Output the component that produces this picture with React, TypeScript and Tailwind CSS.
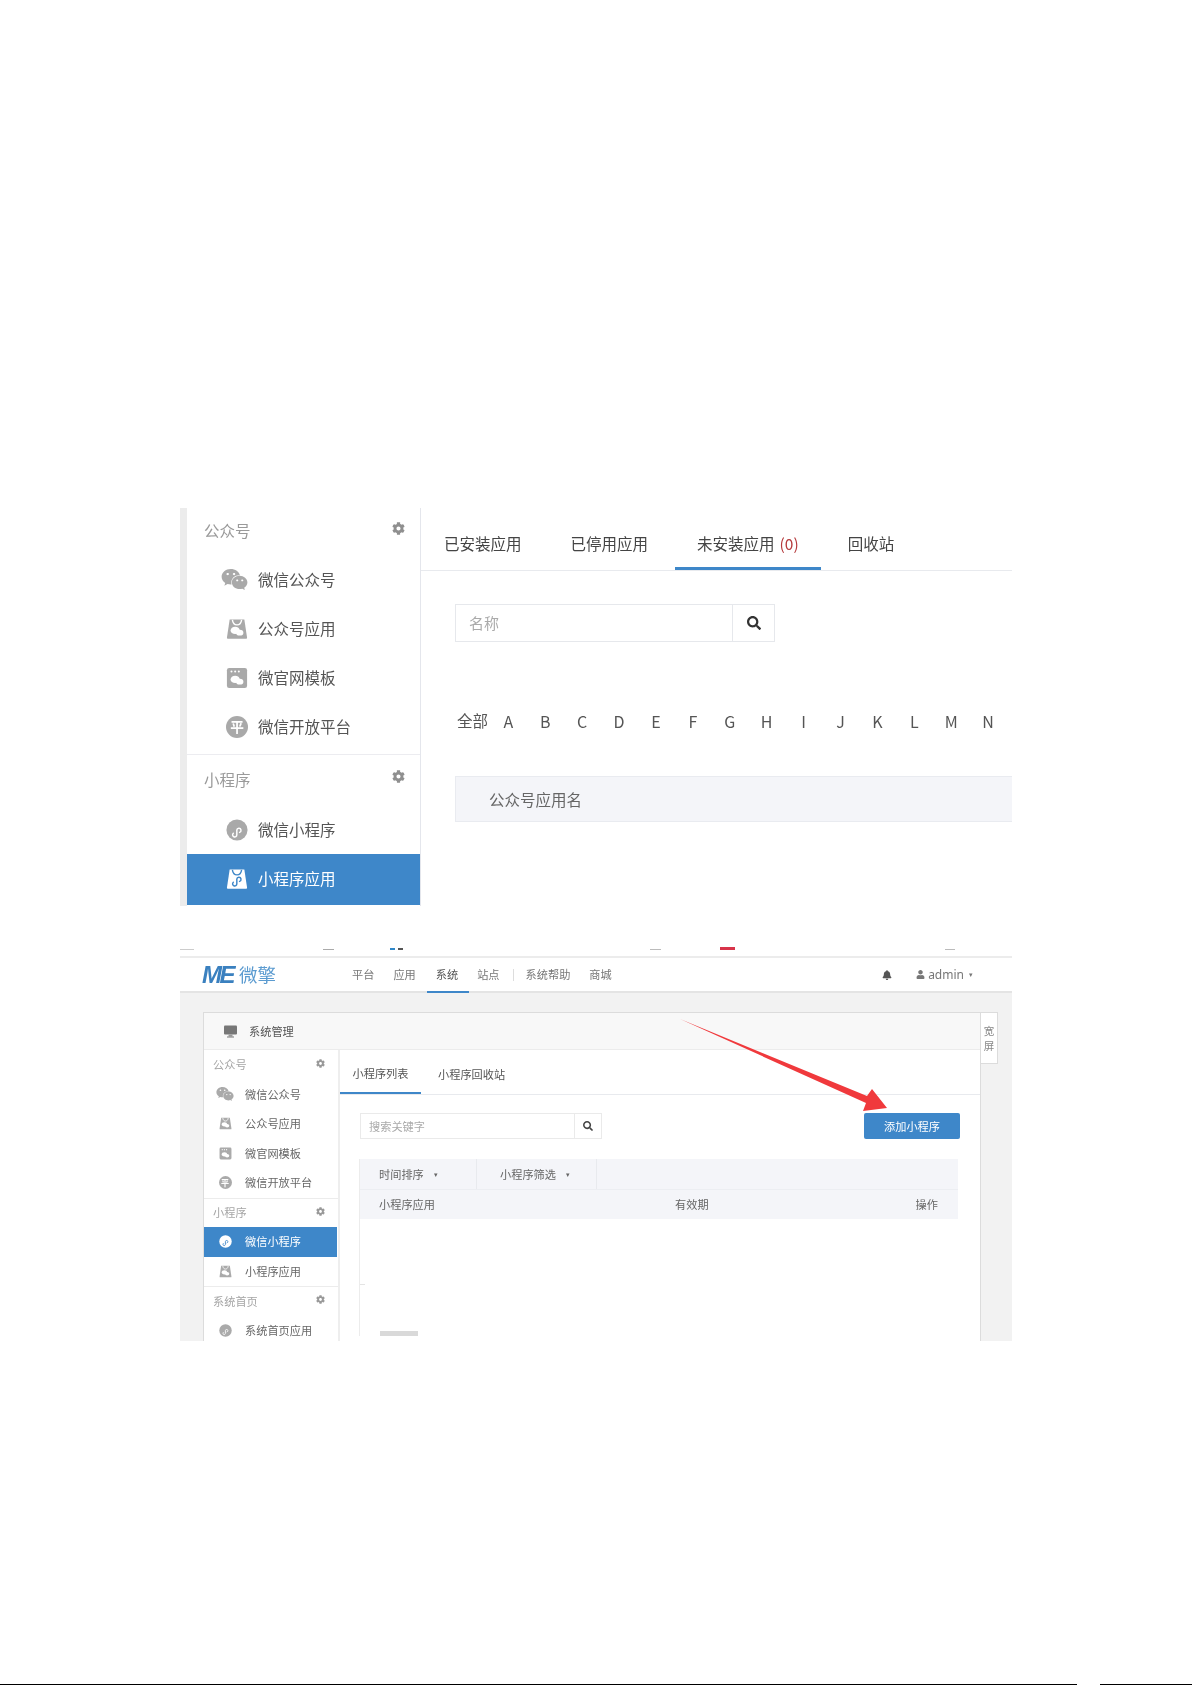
import { FaBell, FaCog, FaSearch, FaUser, FaWeixin } from "react-icons/fa";

const LETTERS = ["A", "B", "C", "D", "E", "F", "G", "H", "I", "J", "K", "L", "M", "N"];

type IconKind = "wechat" | "bag" | "template" | "open" | "mini" | "miniBag";

function BubbleMark({ fg }: { fg: string }) {
  return (
    <>
      <ellipse cx="10" cy="13.500" rx="5" ry="4" fill={fg} />
      <ellipse cx="15" cy="16" rx="4" ry="3.200" fill={fg} />
    </>
  );
}

function NoteMark({ fg }: { fg: string }) {
  return (
    <path
      d="M8 15.500a2.300 2.300 0 1 0 3.800 1.700v-5a2.300 2.300 0 1 1 3 2.400"
      fill="none"
      stroke={fg}
      strokeWidth="1.600"
      strokeLinecap="round"
    />
  );
}

// bag outline with the handle cut out as a thin arc
function BagShape({ color, fg }: { color: string; fg: string }) {
  return (
    <>
      <path fill={color} d="M4 1.500h16l3 20a1 1 0 0 1-1 1H2a1 1 0 0 1-1-1z" />
      <path d="M7 2c.500 4 3 5.500 5 5.500s4.500-1.500 5-5.500" fill="none" stroke={fg} strokeWidth="1.500" />
    </>
  );
}

function AppIcon({ kind, size, color, fg }: { kind: IconKind; size: number; color: string; fg: string }) {
  if (kind === "wechat") return <FaWeixin size={size + 5} color={color} />;
  if (kind === "open") {
    return (
      <span
        className="flex items-center justify-center rounded-full font-bold leading-none text-white"
        style={{ width: size, height: size, backgroundColor: color, fontSize: size * 0.62 }}
      >
        平
      </span>
    );
  }
  return (
    <svg width={size} height={size} viewBox="0 0 24 24">
      {(kind === "bag" || kind === "miniBag") && <BagShape color={color} fg={fg} />}
      {kind === "template" && (
        <>
          <rect x="1" y="1" width="22" height="22" rx="2.500" fill={color} />
          <circle cx="6" cy="5" r="1.100" fill={fg} />
          <circle cx="10" cy="5" r="1.100" fill={fg} />
          <circle cx="14" cy="5" r="1.100" fill={fg} />
        </>
      )}
      {kind === "mini" && <circle cx="12" cy="12" r="11.500" fill={color} />}
      {(kind === "bag" || kind === "template") && <BubbleMark fg={fg} />}
      {(kind === "mini" || kind === "miniBag") && <NoteMark fg={fg} />}
    </svg>
  );
}

function LargeSidebar() {
  const items: { label: string; kind: IconKind }[] = [
    { label: "微信公众号", kind: "wechat" },
    { label: "公众号应用", kind: "bag" },
    { label: "微官网模板", kind: "template" },
    { label: "微信开放平台", kind: "open" },
  ];

  return (
    <div className="w-[234px] shrink-0 border-r border-[#e4e6ec]">
      <div className="flex h-[45px] items-center justify-between pl-[17px] pr-[15px]">
        <span className="text-[15.500px] text-[#9a9a9a]">公众号</span>
        <FaCog size={13} color="#8f8f8f" className="-mt-[5px]" />
      </div>
      <div className="h-[2px]" />
      {items.map(item => (
        <div key={item.label} className="flex h-[49px] items-center text-[15.500px] text-[#555]">
          <span className="flex w-[71px] justify-end pr-[10px]">
            <AppIcon kind={item.kind} size={22} color="#a9a9a9" fg="#fff" />
          </span>
          {item.label}
        </div>
      ))}
      <div className="mt-[3px] flex h-[51px] items-center justify-between border-t border-[#ececf0] pl-[17px] pr-[15px]">
        <span className="text-[15.500px] text-[#9a9a9a]">小程序</span>
        <FaCog size={13} color="#8f8f8f" className="-mt-[7px]" />
      </div>
      <div className="flex h-[49px] items-center text-[15.500px] text-[#555]">
        <span className="flex w-[71px] justify-end pr-[10px]">
          <AppIcon kind="mini" size={22} color="#a9a9a9" fg="#fff" />
        </span>
        微信小程序
      </div>
      <div className="flex h-[51px] items-center bg-[#3e87c9] pb-[2px] text-[15.500px] text-white">
        <span className="flex w-[71px] justify-end pr-[10px]">
          <AppIcon kind="miniBag" size={22} color="#fff" fg="#3e87c9" />
        </span>
        小程序应用
      </div>
    </div>
  );
}

function LargeContent() {
  return (
    <div className="min-w-0 flex-1">
      <div className="flex h-[63px] gap-[5px] border-b border-[#e8eaee] pl-[1px] text-[15.500px] text-[#444]">
        <div className="flex items-center px-[22px] pt-[10px]">已安装应用</div>
        <div className="flex items-center px-[22px] pt-[10px]">已停用应用</div>
        <div className="flex items-center border-b-[3px] border-[#3e87c9] px-[22px] pt-[13px]">
          未安装应用 <span className="ml-[5px] text-[#b5393b]">(0)</span>
        </div>
        <div className="flex items-center px-[22px] pt-[10px]">回收站</div>
      </div>
      <div className="ml-[34px] mt-[33px] flex h-[38px] w-[320px] border border-[#e6e8ec]">
        <div className="flex flex-1 items-center pl-[13px] text-[15px] text-[#aaa]">名称</div>
        <div className="flex w-[42px] items-center justify-center border-l border-[#e6e8ec]">
          <FaSearch size={14} color="#333" />
        </div>
      </div>
      <div className="ml-[36px] mt-[64px] flex h-[30px] items-center text-[16px] text-[#555]">
        <span className="w-[33px] shrink-0 text-[15.500px]">全部</span>
        {LETTERS.map(letter => (
          <span key={letter} className="w-[36.900px] shrink-0 text-center">
            {letter}
          </span>
        ))}
      </div>
      <div className="ml-[34px] mt-[40px] flex h-[46px] items-center border border-r-0 border-[#e9ebf0] bg-[#f4f5f9] pl-[33px] pt-[2px] text-[15.500px] text-[#666]">
        公众号应用名
      </div>
    </div>
  );
}

function SmallSideRow({ label, kind, active }: { label: string; kind: IconKind; active?: boolean }) {
  return (
    <div
      className={`flex h-[29.500px] items-center text-[11.200px] ${
        active ? "mr-[1px] bg-[#3e87c9] text-white" : "text-[#666]"
      }`}
    >
      <span className="flex w-[41px] justify-center pl-[1px]">
        <AppIcon kind={kind} size={13} color={active ? "#fff" : "#aaa"} fg={active ? "#3e87c9" : "#fff"} />
      </span>
      {label}
    </div>
  );
}

function SmallSideHead({ label, divided }: { label: string; divided?: boolean }) {
  return (
    <div
      className={`flex h-[29.500px] items-center justify-between pl-[9px] pr-[13px] text-[11.200px] text-[#a5a5a5] ${
        divided ? "border-t border-[#ececec]" : ""
      }`}
    >
      {label}
      <FaCog size={9} color="#999" className="-mt-[3px]" />
    </div>
  );
}

function AdminScreenshot() {
  return (
    <div className="relative blur-[0.5px]">
      <div className="flex h-[50px] items-end pb-[6px]">
        <span className="h-px w-[14px] bg-[#ccc]" />
        <span className="ml-[129px] h-px w-[11px] bg-[#aaa]" />
        <span className="ml-[56px] h-[2px] w-[5px] bg-[#2f87c8]" />
        <span className="ml-[3px] h-[2px] w-[5px] bg-[#555]" />
        <span className="ml-[247px] h-px w-[11px] bg-[#bbb]" />
        <span className="ml-[59px] h-[3px] w-[15px] bg-[#d8344a]" />
        <span className="ml-[210px] h-px w-[10px] bg-[#bbb]" />
      </div>
      <div className="flex h-[37px] items-center border-y-2 border-y-[#e4e4e4] border-t-[#ececec] text-[11.200px] text-[#777]">
        <div className="flex w-[172px] items-center pl-[22px]">
          <span className="font-['Liberation_Sans',sans-serif] text-[24px] font-bold italic leading-none tracking-[-2.500px] text-[#3a80bf]">
            ME
          </span>
          <span className="ml-[6px] text-[18.500px] leading-none text-[#5b9bd0]">微擎</span>
        </div>
        <span>平台</span>
        <span className="ml-[19px]">应用</span>
        <span className="relative ml-[20px] text-[#555]">
          系统
          <span className="absolute -bottom-[10px] -left-[9px] h-[2px] w-[42px] bg-[#3e87c9]" />
        </span>
        <span className="ml-[19px]">站点</span>
        <span className="ml-[13px] h-[12px] w-px bg-[#ddd]" />
        <span className="ml-[12px]">系统帮助</span>
        <span className="ml-[19px]">商城</span>
        <span className="ml-auto flex items-center pr-[39px] text-[#777]">
          <FaBell size={10} color="#555" />
          <span className="ml-[24px] flex items-center">
            <FaUser size={9} color="#777" />
            <span className="ml-[3px] font-['Noto_Sans',sans-serif] text-[12px]">admin</span>
            <span className="ml-[5px] text-[7px]">▾</span>
          </span>
        </span>
      </div>
      <div className="flex h-[348px] overflow-hidden bg-[#f2f2f2] pl-[23px] pt-[19px]">
        <div className="h-[360px] w-[778px] shrink-0 border border-[#dcdcdc] bg-white">
          <div className="flex h-[37px] items-center border-b border-[#ececec] bg-[#f8f8f8] pl-[20px] text-[11.200px] text-[#555]">
            <svg width="13" height="13" viewBox="0 0 13 13">
              <rect x="0" y="0.500" width="13" height="9" rx="1" fill="#777" />
              <rect x="4.500" y="9.500" width="4" height="2" fill="#999" />
              <rect x="3" y="11.500" width="7" height="1" fill="#777" />
            </svg>
            <span className="ml-[12px]">系统管理</span>
          </div>
          <div className="flex">
            <div className="w-[136px] shrink-0 border-r-2 border-[#eeeeee]">
              <SmallSideHead label="公众号" />
              <SmallSideRow label="微信公众号" kind="wechat" />
              <SmallSideRow label="公众号应用" kind="bag" />
              <SmallSideRow label="微官网模板" kind="template" />
              <SmallSideRow label="微信开放平台" kind="open" />
              <SmallSideHead label="小程序" divided />
              <SmallSideRow label="微信小程序" kind="mini" active />
              <SmallSideRow label="小程序应用" kind="bag" />
              <SmallSideHead label="系统首页" divided />
              <SmallSideRow label="系统首页应用" kind="mini" />
            </div>
            <div className="min-w-0 flex-1">
              <div className="flex h-[45px] border-b border-[#e8eaee] text-[11.200px] text-[#555]">
                <div className="flex w-[81px] items-center justify-center border-b-2 border-[#3e87c9] pt-[4px]">
                  小程序列表
                </div>
                <div className="ml-[17px] flex items-center pt-[4px]">小程序回收站</div>
              </div>
              <div className="mt-[18px] flex items-start justify-between pl-[20px] pr-[20px]">
                <div className="flex h-[26px] w-[242px] border border-[#eaeaea]">
                  <div className="flex flex-1 items-center pl-[8px] text-[11.200px] text-[#aaa]">搜索关键字</div>
                  <div className="flex w-[27px] items-center justify-center border-l border-[#eaeaea]">
                    <FaSearch size={10} color="#444" />
                  </div>
                </div>
                <div className="flex h-[26px] w-[96px] items-center justify-center rounded-[2px] bg-[#3e87c9] text-[11.200px] text-white">
                  添加小程序
                </div>
              </div>
              <div className="ml-[19px] mr-[22px] mt-[20px] border-l border-[#ececec] text-[11.200px] text-[#666]">
                <div className="flex h-[30px] items-center bg-[#f4f5f9]">
                  <div className="flex h-full w-[117px] items-center border-r border-[#e8eaee] pl-[19px]">
                    时间排序<span className="ml-[10px] text-[7px]">▾</span>
                  </div>
                  <div className="flex h-full w-[120px] items-center border-r border-[#e8eaee] pl-[23px]">
                    小程序筛选<span className="ml-[10px] text-[7px]">▾</span>
                  </div>
                </div>
                <div className="flex h-[30px] items-center border-t border-[#eceef2] bg-[#f4f5f9] pl-[19px] pr-[20px]">
                  <span className="w-[296px]">小程序应用</span>
                  <span>有效期</span>
                  <span className="ml-auto">操作</span>
                </div>
                <div className="h-[66px] w-[5px] border-b border-[#e4e4e4]" />
                <div className="ml-[20px] mt-[46px] h-[5px] w-[38px] bg-[#d9d9d9]" />
              </div>
            </div>
          </div>
        </div>
        <div className="flex h-[52px] w-[17px] shrink-0 flex-col items-center justify-center border border-l-0 border-[#dcdcdc] bg-white text-[10.500px] leading-[15px] text-[#888]">
          <span>宽</span>
          <span>屏</span>
        </div>
      </div>
      <svg className="absolute left-[500px] top-[113px]" width="210" height="95" viewBox="0 0 210 95">
        <polygon fill="#f0393c" points="0,0 187,77 192,70 207,89 183,92 186,84" />
      </svg>
    </div>
  );
}

export default function App() {
  return (
    <div className="flex min-h-[1685px] flex-col bg-white font-['Noto_Sans_CJK_SC','Noto_Sans',sans-serif]">
      <div className="ml-[180px] mt-[508px] w-[832px]">
        <div className="flex h-[398px] overflow-hidden blur-[0.2px]">
          <div className="w-[7px] shrink-0 bg-[#ececec]" />
          <LargeSidebar />
          <LargeContent />
        </div>
        <AdminScreenshot />
      </div>
      <div className="mt-auto flex h-px items-center">
        <span className="h-px w-[1077px] bg-black" />
        <span className="ml-[23px] h-px flex-1 bg-black" />
      </div>
    </div>
  );
}
